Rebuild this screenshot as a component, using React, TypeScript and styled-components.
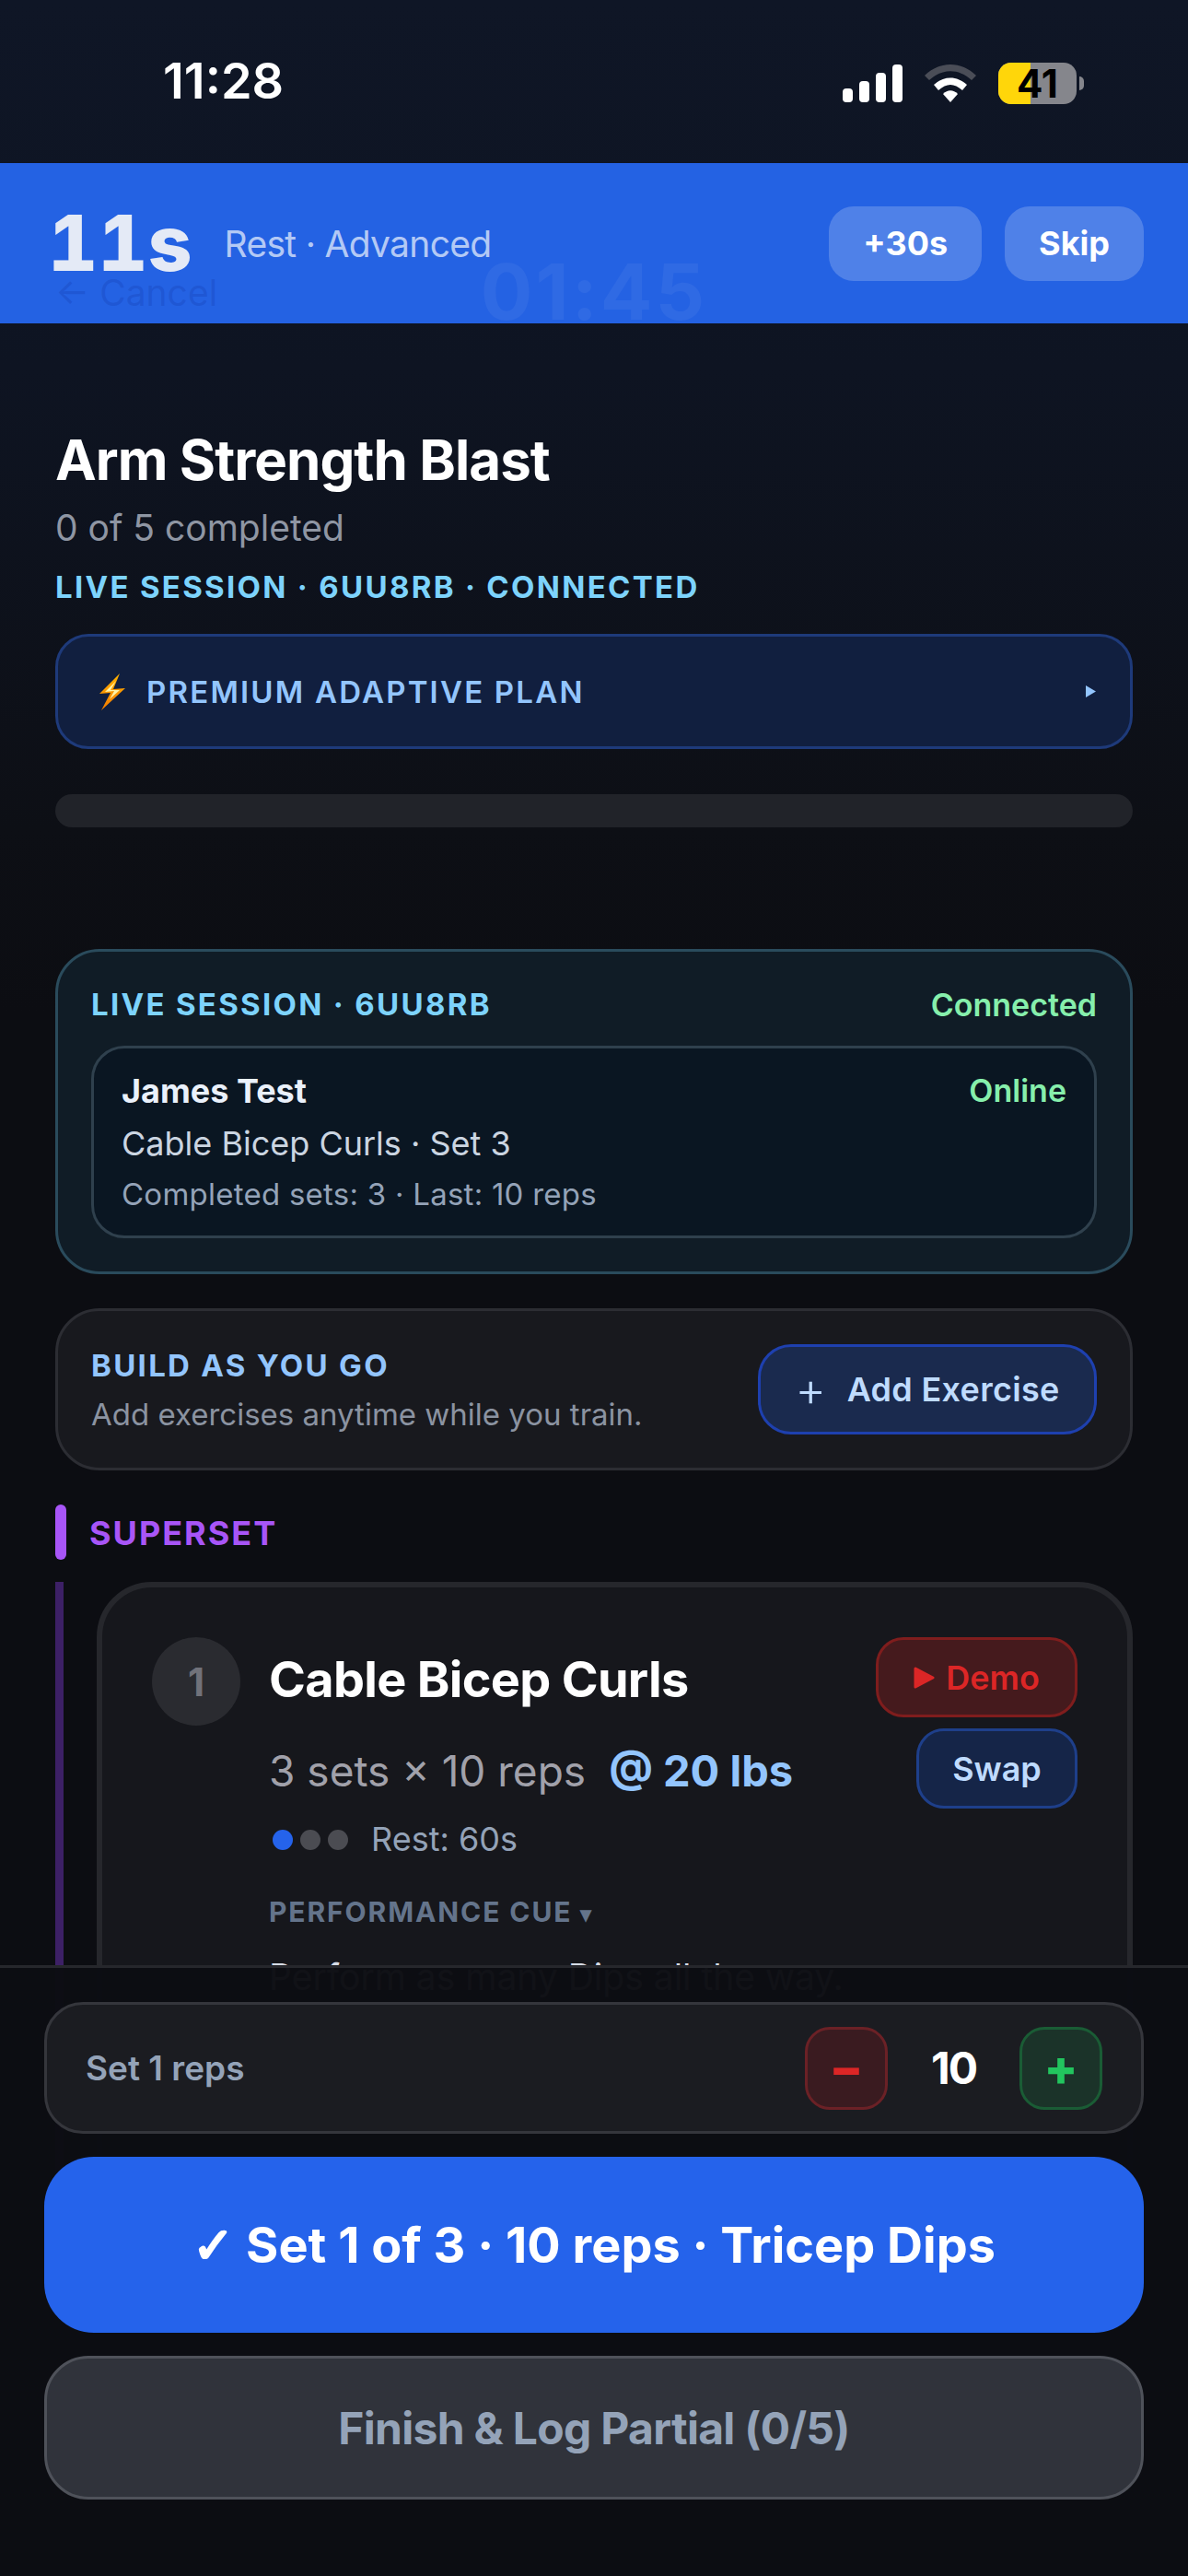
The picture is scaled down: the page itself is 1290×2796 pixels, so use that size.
import React, { FC } from "react";
import styled, { createGlobalStyle } from "styled-components";

const GlobalStyle = createGlobalStyle`
  * {
    box-sizing: border-box;
  }

  html,
  body {
    margin: 0;
    padding: 0;
    background: #0c0d12;
  }

  body {
    font-family: "Inter", "Liberation Sans", sans-serif;
  }
`;

const App: FC = () => {
  return (
    <Screen>
      <GlobalStyle />
      <StatusBar>
        <StatusTime>11:28</StatusTime>
        <StatusIcons>
          <svg width="65" height="41" viewBox="0 0 65 41" fill="#fff">
            <rect x="0" y="26" width="11" height="15" rx="4" />
            <rect x="18" y="18" width="11" height="23" rx="4" />
            <rect x="36" y="9" width="11" height="32" rx="4" />
            <rect x="54" y="0" width="11" height="41" rx="4" />
          </svg>
          <svg width="58" height="42" viewBox="0 0 58 42">
            <path d="M1 13 C17 -3 41 -3 57 13 L52 18 C38 5 20 5 6 18 Z" fill="#4a4d57" />
            <path d="M11 23 C22 13 36 13 47 23 L42 29 C33 21 25 21 16 29 Z" fill="#fff" />
            <path d="M21 33 C26 28 32 28 37 33 L29 42 Z" fill="#fff" />
          </svg>
          <Battery>
            <BatteryBody>
              <BatteryLevel />
              <BatteryText>41</BatteryText>
            </BatteryBody>
            <BatteryTip />
          </Battery>
        </StatusIcons>
      </StatusBar>

      <RestBanner>
        <RestLeft>
          <RestSeconds>11s</RestSeconds>
          <RestLabel>Rest · Advanced</RestLabel>
        </RestLeft>
        <RestActions>
          <RestButton>+30s</RestButton>
          <RestButton>Skip</RestButton>
        </RestActions>
      </RestBanner>

      <WorkoutHeader>
        <CancelLink>← Cancel</CancelLink>
        <ElapsedTime>01:45</ElapsedTime>
      </WorkoutHeader>

      <Main>
        <WorkoutTitle>Arm Strength Blast</WorkoutTitle>
        <WorkoutProgress>0 of 5 completed</WorkoutProgress>
        <SessionLine>LIVE SESSION · 6UU8RB · CONNECTED</SessionLine>

        <PlanBar>
          <PlanLeft>
            <svg width="30" height="42" viewBox="0 0 30 42">
              <defs>
                <linearGradient id="bolt" x1="0" y1="0" x2="0" y2="1">
                  <stop offset="0" stopColor="#ffb300" />
                  <stop offset="1" stopColor="#f57c00" />
                </linearGradient>
              </defs>
              <path d="M23 1 L1 23 L13 22 L3 41 L29 17 L16 18 Z" fill="url(#bolt)" />
              <path d="M19 9 L7 21 L17 20 L12 29 L23 19 L13 19 Z" fill="#fff3a8" />
            </svg>
            <PlanLabel>PREMIUM ADAPTIVE PLAN</PlanLabel>
          </PlanLeft>
          <svg width="13" height="15" viewBox="0 0 13 15" fill="#93c5fd">
            <path d="M1 1 L12 7.5 L1 14 Z" />
          </svg>
        </PlanBar>

        <ProgressTrack />

        <SessionCard>
          <SessionHeader>
            <SessionTitle>LIVE SESSION · 6UU8RB</SessionTitle>
            <StatusGreen>Connected</StatusGreen>
          </SessionHeader>
          <AthleteCard>
            <AthleteTop>
              <AthleteName>James Test</AthleteName>
              <StatusGreen>Online</StatusGreen>
            </AthleteTop>
            <AthleteExercise>Cable Bicep Curls · Set 3</AthleteExercise>
            <AthleteMeta>Completed sets: 3 · Last: 10 reps</AthleteMeta>
          </AthleteCard>
        </SessionCard>

        <BuildCard>
          <div>
            <BuildTitle>BUILD AS YOU GO</BuildTitle>
            <BuildText>Add exercises anytime while you train.</BuildText>
          </div>
          <AddButton>
            <AddPlus>+</AddPlus>
            Add Exercise
          </AddButton>
        </BuildCard>

        <SupersetHeader>
          <SupersetMark />
          <SupersetLabel>SUPERSET</SupersetLabel>
        </SupersetHeader>

        <SupersetBody>
          <ExerciseCard>
            <ExerciseNumber>1</ExerciseNumber>
            <ExerciseInfo>
              <ExerciseName>Cable Bicep Curls</ExerciseName>
              <SetsRow>
                <SetsText>3 sets × 10 reps</SetsText>
                <WeightText>@ 20 lbs</WeightText>
              </SetsRow>
              <RestRow>
                <Dots>
                  <Dot $active />
                  <Dot />
                  <Dot />
                </Dots>
                <RestText>Rest: 60s</RestText>
              </RestRow>
              <CueLabel>
                PERFORMANCE CUE <CueCaret>▾</CueCaret>
              </CueLabel>
              <CueText>
                Perform as many Dips all the way.
                <br />
                Keep your elbows tucked and chest tall
              </CueText>
            </ExerciseInfo>
            <ExerciseActions>
              <DemoButton>
                <svg width="23" height="24" viewBox="0 0 23 24" fill="#dc2626">
                  <path d="M2 2 L21 12 L2 22 Z" stroke="#dc2626" strokeWidth="3" strokeLinejoin="round" />
                </svg>
                Demo
              </DemoButton>
              <SwapButton>Swap</SwapButton>
            </ExerciseActions>
          </ExerciseCard>
        </SupersetBody>
      </Main>

      <Footer>
        <RepsRow>
          <RepsLabel>Set 1 reps</RepsLabel>
          <RepsControls>
            <StepButton $tone="minus">−</StepButton>
            <RepsValue>10</RepsValue>
            <StepButton $tone="plus">+</StepButton>
          </RepsControls>
        </RepsRow>
        <CompleteButton>
          <CheckGlyph>✓</CheckGlyph> Set 1 of 3 · 10 reps · Tricep Dips
        </CompleteButton>
        <FinishButton>Finish &amp; Log Partial (0/5)</FinishButton>
      </Footer>
    </Screen>
  );
};

export default App;

const Screen = styled.div`
  position: relative;
  width: 1290px;
  height: 2796px;
  overflow: hidden;
  background: linear-gradient(180deg, #0f1626 0, #0e1422 400px, #0d0f15 900px, #0c0d12 1100px);
`;

const StatusBar = styled.div`
  height: 177px;
  display: flex;
  justify-content: space-between;
  padding: 56px 113px 0 177px;
`;

const StatusTime = styled.span`
  font-size: 54px;
  line-height: 64px;
  font-weight: 600;
  color: #fff;
`;

const StatusIcons = styled.div`
  height: 50px;
  display: flex;
  align-items: center;
  gap: 23px;
  margin-top: 9px;
`;

const Battery = styled.div`
  display: flex;
  align-items: center;
  gap: 3px;
`;

const BatteryBody = styled.div`
  position: relative;
  width: 85px;
  height: 45px;
  display: flex;
  align-items: center;
  justify-content: center;
  overflow: hidden;
  border-radius: 14px;
  background: #85868c;
`;

const BatteryLevel = styled.div`
  position: absolute;
  left: 0;
  top: 0;
  bottom: 0;
  width: 41%;
  background: #ffd60a;
`;

const BatteryText = styled.span`
  position: relative;
  font-size: 42px;
  font-weight: 700;
  line-height: 45px;
  color: #000;
`;

const BatteryTip = styled.div`
  width: 5px;
  height: 15px;
  border-radius: 0 5px 5px 0;
  background: #85868c;
`;

const RestBanner = styled.div`
  position: absolute;
  left: 0;
  right: 0;
  top: 177px;
  height: 174px;
  display: flex;
  align-items: center;
  justify-content: space-between;
  padding: 0 48px 0 52px;
  background: #2462e3;
`;

const RestLeft = styled.div`
  display: flex;
  align-items: center;
  gap: 35px;
`;

const RestSeconds = styled.span`
  font-size: 84px;
  font-weight: 800;
  line-height: 100px;
  font-variant-numeric: tabular-nums;
  color: #e4eaf6;
`;

const RestLabel = styled.span`
  font-size: 39px;
  font-weight: 400;
  letter-spacing: -0.7px;
  color: rgba(255, 255, 255, 0.68);
`;

const RestActions = styled.div`
  display: flex;
  gap: 25px;
`;

const RestButton = styled.button`
  height: 81px;
  padding: 0 37px;
  border: none;
  border-radius: 27px;
  background: rgba(255, 255, 255, 0.2);
  font-family: inherit;
  font-size: 36px;
  font-weight: 700;
  color: #fff;
`;

const WorkoutHeader = styled.div`
  position: relative;
  z-index: 1;
  height: 174px;
  display: grid;
  grid-template-columns: 1fr auto 1fr;
  align-items: center;
  padding: 98px 60px 0;
  pointer-events: none;
`;

const CancelLink = styled.span`
  font-size: 39px;
  color: rgba(20, 60, 175, 0.3);
`;

const ElapsedTime = styled.span`
  font-size: 84px;
  font-weight: 700;
  line-height: 1;
  letter-spacing: 3px;
  color: rgba(255, 255, 255, 0.05);
`;

const Main = styled.main`
  display: flex;
  flex-direction: column;
  padding: 112px 60px 0;
`;

const WorkoutTitle = styled.h1`
  margin: 0;
  font-size: 60px;
  font-weight: 700;
  line-height: 72px;
  letter-spacing: -0.95px;
  color: #fff;
`;

const WorkoutProgress = styled.div`
  margin-top: 14px;
  font-size: 39px;
  line-height: 47px;
  color: #8f96a3;
`;

const SessionLine = styled.div`
  margin-top: 21px;
  font-size: 33px;
  font-weight: 700;
  line-height: 40px;
  letter-spacing: 2.3px;
  color: #7dd3fc;
`;

const PlanBar = styled.div`
  margin-top: 31px;
  height: 125px;
  display: flex;
  align-items: center;
  justify-content: space-between;
  padding: 0 36px 0 44px;
  border: 3px solid #1e3a7a;
  border-radius: 36px;
  background: #111f3f;
`;

const PlanLeft = styled.div`
  display: flex;
  align-items: center;
  gap: 22px;
`;

const PlanLabel = styled.span`
  font-size: 33px;
  font-weight: 600;
  letter-spacing: 2.2px;
  color: #93c5fd;
`;

const ProgressTrack = styled.div`
  margin-top: 49px;
  height: 36px;
  border-radius: 18px;
  background: #212329;
`;

const SessionCard = styled.section`
  margin-top: 132px;
  height: 353px;
  padding: 36px;
  border: 3px solid #2a4b5c;
  border-radius: 48px;
  background: #101c26;
`;

const SessionHeader = styled.div`
  display: flex;
  align-items: center;
  justify-content: space-between;
  height: 40px;
  margin-top: 1px;
`;

const SessionTitle = styled.span`
  font-size: 33px;
  font-weight: 700;
  letter-spacing: 2.3px;
  color: #7dd3fc;
`;

const StatusGreen = styled.span`
  font-size: 34px;
  font-weight: 600;
  color: #86efac;
`;

const AthleteCard = styled.div`
  margin-top: 25px;
  height: 209px;
  padding: 24px 30px;
  border: 3px solid #2f404d;
  border-radius: 36px;
  background: #0a1622;
`;

const AthleteTop = styled.div`
  display: flex;
  align-items: center;
  justify-content: space-between;
  height: 43px;
`;

const AthleteName = styled.span`
  font-size: 36px;
  font-weight: 700;
  color: #eaf1fb;
`;

const AthleteExercise = styled.div`
  margin-top: 15px;
  font-size: 36px;
  line-height: 43px;
  color: #cbd5e1;
`;

const AthleteMeta = styled.div`
  margin-top: 13px;
  font-size: 33px;
  line-height: 40px;
  letter-spacing: 0.25px;
  color: #94a3b8;
`;

const BuildCard = styled.section`
  margin-top: 37px;
  height: 176px;
  display: flex;
  align-items: center;
  justify-content: space-between;
  padding: 0 36px;
  border: 3px solid #2c2d33;
  border-radius: 48px;
  background: #18191e;
`;

const BuildTitle = styled.div`
  font-size: 33px;
  font-weight: 700;
  line-height: 40px;
  letter-spacing: 2.3px;
  color: #93c5fd;
`;

const BuildText = styled.div`
  margin-top: 13px;
  font-size: 33px;
  line-height: 40px;
  color: #8b93a1;
`;

const AddButton = styled.button`
  width: 368px;
  height: 98px;
  display: flex;
  align-items: center;
  justify-content: center;
  gap: 22px;
  border: 3px solid #1e40af;
  border-radius: 36px;
  background: #1a2a4e;
  font-family: inherit;
  font-size: 36px;
  font-weight: 600;
  letter-spacing: 0.3px;
  color: #bfdbfe;
`;

const AddPlus = styled.span`
  font-size: 52px;
  font-weight: 300;
  line-height: 1;
`;

const SupersetHeader = styled.div`
  margin-top: 37px;
  height: 60px;
  display: flex;
  align-items: center;
  gap: 25px;
`;

const SupersetMark = styled.div`
  width: 12px;
  height: 60px;
  border-radius: 6px;
  background: #a855f7;
`;

const SupersetLabel = styled.span`
  margin-top: 2px;
  font-size: 36px;
  font-weight: 700;
  letter-spacing: 2px;
  color: #a855f7;
`;

const SupersetBody = styled.div`
  margin-top: 24px;
  padding-left: 36px;
  border-left: 9px solid #3d2066;
`;

const ExerciseCard = styled.article`
  display: flex;
  align-items: flex-start;
  gap: 31px;
  height: 700px;
  padding: 54px;
  border: 6px solid #26272c;
  border-radius: 60px;
  background: #16171c;
`;

const ExerciseNumber = styled.div`
  flex: none;
  width: 96px;
  height: 96px;
  display: flex;
  align-items: center;
  justify-content: center;
  border-radius: 50%;
  background: #2a2b30;
  font-size: 42px;
  font-weight: 700;
  color: #71727a;
`;

const ExerciseInfo = styled.div`
  flex: 1;
  min-width: 0;
  padding-top: 13px;
`;

const ExerciseName = styled.h2`
  margin: 0;
  font-size: 54px;
  font-weight: 700;
  line-height: 65px;
  letter-spacing: -0.7px;
  color: #fff;
`;

const SetsRow = styled.div`
  margin-top: 38px;
  display: flex;
  align-items: baseline;
  gap: 25px;
  white-space: nowrap;
`;

const SetsText = styled.span`
  font-size: 46px;
  line-height: 58px;
  color: #a1a1aa;
`;

const WeightText = styled.span`
  font-size: 47px;
  font-weight: 700;
  line-height: 58px;
  color: #93c5fd;
`;

const RestRow = styled.div`
  margin-top: 24px;
  display: flex;
  align-items: center;
  gap: 25px;
  padding-left: 4px;
`;

const Dots = styled.div`
  display: flex;
  gap: 8px;
`;

const Dot = styled.span<{ $active?: boolean }>`
  width: 22px;
  height: 22px;
  border-radius: 50%;
  background: ${(p) => (p.$active ? "#2563eb" : "#4b4c52")};
`;

const RestText = styled.span`
  font-size: 36px;
  line-height: 43px;
  color: #94a3b8;
`;

const CueLabel = styled.div`
  margin-top: 39px;
  font-size: 30px;
  font-weight: 700;
  line-height: 36px;
  letter-spacing: 1.9px;
  color: #64748b;
`;

const CueCaret = styled.span`
  font-size: 24px;
`;

const CueText = styled.p`
  margin: 21px 0 0;
  width: 860px;
  font-size: 39px;
  line-height: 58px;
  color: #d6dce6;
`;

const ExerciseActions = styled.div`
  flex: none;
  display: flex;
  flex-direction: column;
  align-items: flex-end;
  gap: 12px;
`;

const DemoButton = styled.button`
  width: 219px;
  height: 87px;
  display: flex;
  align-items: center;
  justify-content: center;
  gap: 12px;
  border: 3px solid #7f1d1d;
  border-radius: 30px;
  background: #451a1d;
  font-family: inherit;
  font-size: 36px;
  font-weight: 600;
  color: #dc2626;
`;

const SwapButton = styled.button`
  width: 175px;
  height: 87px;
  border: 3px solid #1e3f8a;
  border-radius: 30px;
  background: #152548;
  font-family: inherit;
  font-size: 36px;
  font-weight: 600;
  color: #bfdbfe;
`;

const Footer = styled.footer`
  position: absolute;
  left: 0;
  right: 0;
  bottom: 0;
  height: 663px;
  display: flex;
  flex-direction: column;
  gap: 25px;
  padding: 37px 48px 84px;
  border-top: 3px solid #26272c;
  background: rgba(12, 13, 18, 0.98);
`;

const RepsRow = styled.div`
  flex: none;
  height: 143px;
  display: flex;
  align-items: center;
  justify-content: space-between;
  padding: 0 42px;
  border: 3px solid #35363c;
  border-radius: 42px;
  background: rgba(28, 29, 34, 0.97);
`;

const RepsLabel = styled.span`
  font-size: 37px;
  font-weight: 600;
  color: #94a3b8;
`;

const RepsControls = styled.div`
  display: flex;
  align-items: center;
  gap: 47px;
`;

const StepButton = styled.button<{ $tone: "minus" | "plus" }>`
  width: 90px;
  height: 90px;
  padding: 0;
  border: 3px solid ${(p) => (p.$tone === "minus" ? "#6b2126" : "#1a5c35")};
  border-radius: 27px;
  background: ${(p) => (p.$tone === "minus" ? "#3a1b20" : "#1b3329")};
  font-family: inherit;
  font-size: 54px;
  font-weight: 800;
  line-height: 1;
  color: ${(p) => (p.$tone === "minus" ? "#dc2626" : "#22c55e")};
`;

const RepsValue = styled.span`
  font-size: 48px;
  font-weight: 700;
  letter-spacing: -2px;
  color: #fff;
`;

const CompleteButton = styled.button`
  flex: none;
  height: 191px;
  border: none;
  border-radius: 54px;
  background: #2563eb;
  font-family: inherit;
  font-size: 54px;
  font-weight: 700;
  color: #fff;
`;

const CheckGlyph = styled.span`
  font-family: "DejaVu Sans", sans-serif;
  font-weight: 700;
  -webkit-text-stroke: 2.5px #fff;
`;

const FinishButton = styled.button`
  flex: none;
  height: 156px;
  border: 3px solid #4f525a;
  border-radius: 48px;
  background: #30333b;
  font-family: inherit;
  font-size: 48px;
  font-weight: 700;
  letter-spacing: -0.7px;
  color: #94a3b8;
`;
